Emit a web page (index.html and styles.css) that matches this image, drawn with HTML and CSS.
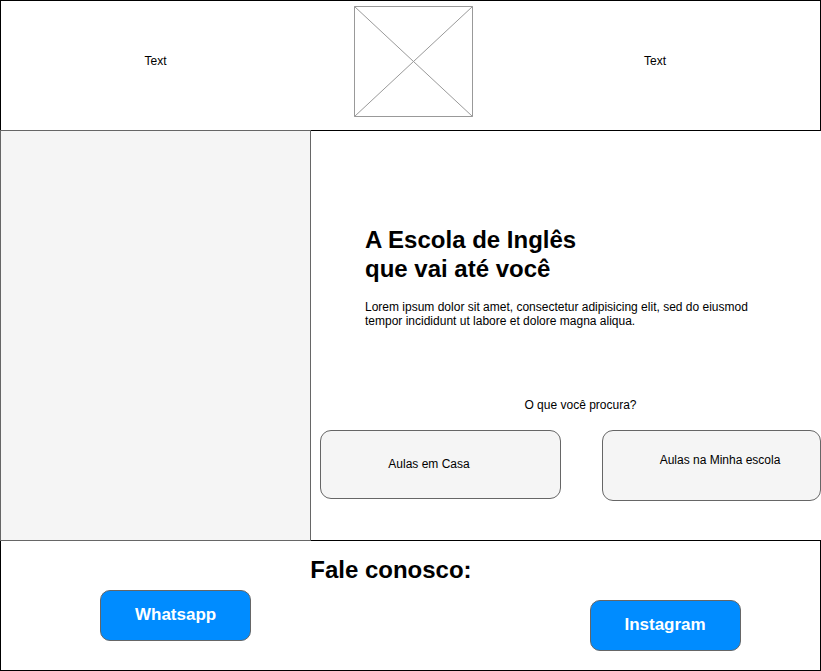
FILE: index.html
```html
<!DOCTYPE html>
<html lang="pt-BR">
<head>
<meta charset="utf-8">
<meta name="viewport" content="width=device-width, initial-scale=1">
<title>A Escola de Inglês</title>
<link rel="stylesheet" href="styles.css">
</head>
<body>
<header class="header">
  <a class="nav-link" href="#aulas">Text</a>
  <svg class="logo" viewBox="0 0 119 111" aria-hidden="true">
    <path d="M.5 .5H118.5V110.5H.5ZM.5 .5L118.5 110.5M118.5 .5L.5 110.5"/>
  </svg>
  <a class="nav-link" href="#contato">Text</a>
</header>
<main class="main">
  <div class="banner"></div>
  <div class="content">
    <section class="intro">
      <h1 class="title">A Escola de Inglês<br>que vai até você</h1>
      <p class="lead">Lorem ipsum dolor sit amet, consectetur adipisicing elit, sed do eiusmod tempor incididunt ut labore et dolore magna aliqua.</p>
    </section>
    <section class="search" id="aulas">
      <p class="question">O que você procura?</p>
      <div class="options">
        <button class="option option-home" type="button">Aulas em Casa</button>
        <button class="option option-school" type="button">Aulas na Minha escola</button>
      </div>
    </section>
  </div>
</main>
<footer class="footer" id="contato">
  <button class="contact whatsapp" type="button">Whatsapp</button>
  <h2 class="title footer-title">Fale conosco:</h2>
  <button class="contact instagram" type="button">Instagram</button>
</footer>
</body>
</html>
```
FILE: styles.css
```css
* {
  box-sizing: border-box;
}

body {
  margin: 0;
  background: #fff;
  color: #000;
  font: 12px/14px "Liberation Sans", Arial, sans-serif;
}

h1, h2, p {
  margin: 0;
}

button {
  font-family: inherit;
  color: inherit;
}

.header {
  display: grid;
  grid-template-columns: 309fr 207fr 303fr;
  justify-items: center;
  align-items: center;
  min-height: 131px;
  padding-bottom: 8px;
  border: 1px solid #000;
}

.nav-link {
  padding-bottom: 2px;
  color: inherit;
  text-decoration: none;
}

.header .nav-link:last-child {
  justify-self: start;
  margin-left: 127px;
}

.logo {
  width: 119px;
  height: 111px;
  fill: none;
  stroke: #999;
}

.main {
  display: grid;
  grid-template-columns: 311fr 510fr;
  margin-top: -1px;
}

.banner {
  background: #f5f5f5;
  border: 1px solid #666;
}

.content {
  display: flex;
  flex-direction: column;
  padding: 95px 0 40px 9px;
}

.intro {
  padding: 0 45px;
}

.title {
  font-size: 24px;
  line-height: 29px;
}

.lead {
  margin-top: 17px;
}

.search {
  margin-top: 70px;
}

.question {
  padding-left: 20px;
  text-align: center;
}

.options {
  display: grid;
  grid-template-columns: 241fr 219fr;
  column-gap: 41px;
  align-items: start;
  margin-top: 18px;
}

.option {
  padding: 0;
  background: #f5f5f5;
  border: 1px solid #666;
  border-radius: 11px;
  font-size: 12px;
  line-height: 14px;
}

.option-home {
  height: 69px;
  padding: 0 23px 2px 0;
}

.option-school {
  height: 71px;
  padding: 0 0 12px 17px;
}

.footer {
  display: grid;
  grid-template-columns: 310fr 280fr 231fr;
  align-items: start;
  min-height: 131px;
  margin-top: -1px;
  padding-top: 14px;
  border: 1px solid #000;
}

.contact {
  width: 151px;
  height: 51px;
  padding: 0 0 2px;
  background: #008cff;
  border: 1px solid #666;
  border-radius: 10px;
  color: #fff;
  font-size: 17px;
  font-weight: bold;
}

.whatsapp {
  justify-self: center;
  margin: 35px 0 0 40px;
}

.instagram {
  margin-top: 45px;
}
```
